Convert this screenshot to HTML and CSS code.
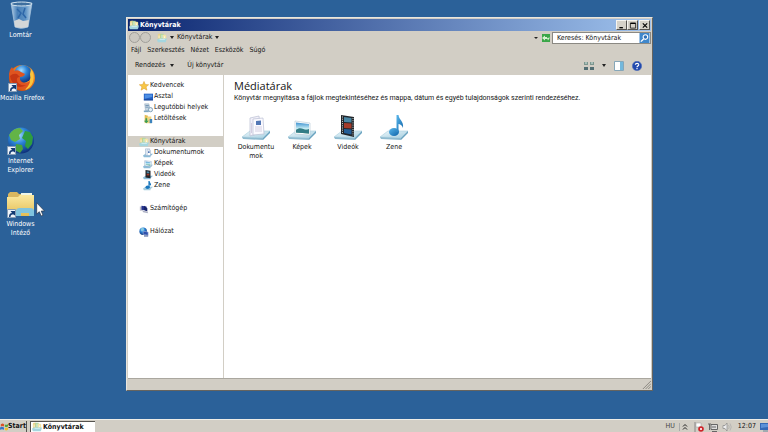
FILE: index.html
```html
<!DOCTYPE html>
<html lang="hu">
<head>
<meta charset="utf-8">
<title>Könyvtárak</title>
<link rel="stylesheet" href="styles.css">
</head>
<body>
<svg class="defs" aria-hidden="true">
  <defs>
    <linearGradient id="g-base" x1="0" y1="0" x2="1" y2="1"><stop offset="0" stop-color="#eef8fb"/><stop offset="1" stop-color="#a4cddf"/></linearGradient>
    <linearGradient id="g-folder" x1="0" y1="0" x2="0" y2="1"><stop offset="0" stop-color="#fbe9a0"/><stop offset="1" stop-color="#e3bd55"/></linearGradient>
    <linearGradient id="g-note" x1="0" y1="0" x2="1" y2="1"><stop offset="0" stop-color="#5bb8ec"/><stop offset="1" stop-color="#0d62a8"/></linearGradient>
    <linearGradient id="g-photo" x1="0" y1="0" x2="0" y2="1"><stop offset="0" stop-color="#3f92d0"/><stop offset=".55" stop-color="#c5ecf4"/><stop offset="1" stop-color="#3d8b74"/></linearGradient>
    <linearGradient id="g-bin" x1="0" y1="0" x2="1" y2="0"><stop offset="0" stop-color="#b4cfe6"/><stop offset=".3" stop-color="#477fb8"/><stop offset=".7" stop-color="#5f94c6"/><stop offset="1" stop-color="#c2d8ea"/></linearGradient>
    <radialGradient id="g-globe" cx=".4" cy=".3" r=".8"><stop offset="0" stop-color="#a5ddff"/><stop offset=".4" stop-color="#2b83d6"/><stop offset="1" stop-color="#071e66"/></radialGradient>
    <radialGradient id="g-fox" cx=".6" cy=".4" r=".7"><stop offset="0" stop-color="#ffd54a"/><stop offset=".6" stop-color="#f0801c"/><stop offset="1" stop-color="#bd3410"/></radialGradient>
    <symbol id="base" viewBox="0 0 30 28">
      <path d="M1 23 9 17H29L22 24Z" fill="url(#g-base)" stroke="#a5cddd" stroke-width=".6"/>
      <path d="M1 23 22 24V26L2 25Z" fill="#8fbbd0"/><path d="M22 24 29 17V19L22 26Z" fill="#6aa3c0"/>
    </symbol>
    <symbol id="docs" viewBox="0 0 30 28">
      <use href="#base"/>
      <path d="M9 4 18 2 20 19 9 22Z" fill="#f3f1fa" stroke="#b9bfd2" stroke-width=".7"/>
      <path d="M12 5 22 4 23 20 12 21Z" fill="#fbfaff" stroke="#b9bfd2" stroke-width=".7"/>
      <path d="M15 7 20 6.500V11L15 11Z" fill="#5377b5"/><path d="M14 13H21M14 15H21M14 17H21M10.500 9V19" stroke="#cdc5da" stroke-width=".8"/>
    </symbol>
    <symbol id="pics" viewBox="0 0 30 28">
      <use href="#base"/>
      <path d="M8 7 23 9V21L8 20Z" fill="#fff" stroke="#b4c8d4" stroke-width=".6"/>
      <path d="M9 8.500 22 10V19.500L9 18.500Z" fill="url(#g-photo)"/><path d="M9 16C14 11 18 18 22 15V19.500L9 18.500Z" fill="#327c86"/>
    </symbol>
    <symbol id="vids" viewBox="0 0 30 28">
      <use href="#base"/>
      <path d="M8 1 21 3V23L8 20Z" fill="#22262b"/>
      <path d="M11 3 18.500 4V8.500L11 8Z" fill="#4a87a4"/><path d="M11 9 18.500 9.500V14.500L11 14Z" fill="#a43b2a"/><path d="M11 15 18.500 15.500V20.500L11 19Z" fill="#245e97"/>
      <path d="M9.500 2.500V20M20 4V22" stroke="#d3d5d0" stroke-width="1" stroke-dasharray="1 1.200"/>
    </symbol>
    <symbol id="music" viewBox="0 0 30 28">
      <use href="#base"/>
      <ellipse cx="15" cy="18" rx="5" ry="4" fill="url(#g-note)"/>
      <path d="M17.500 1H19.500C20 6 25 7 24 14C23 11 21 10 19.500 10V18H17.500Z" fill="url(#g-note)"/>
    </symbol>
    <symbol id="docs-small" viewBox="0 0 12 12"><path d="M0 9 3 7H12L9 10V11H1Z" fill="#8cbcd8"/><path d="M3 1H8V8L3 9Z" fill="#eef3fa" stroke="#8ba6c4" stroke-width=".6"/><path d="M5 2 9 3V9H5Z" fill="#fff" stroke="#8ba6c4" stroke-width=".6"/><path d="M6 4H8V6H6Z" fill="#5377b5"/></symbol>
    <symbol id="pics-small" viewBox="0 0 12 12"><path d="M0 9 3 7H12L9 10V11H1Z" fill="#8cbcd8"/><path d="M2 2 10 3V9L2 8Z" fill="#fff" stroke="#8ba6c4" stroke-width=".6"/><path d="M3 3 9 4V8L3 7Z" fill="url(#g-photo)"/></symbol>
    <symbol id="vids-small" viewBox="0 0 12 12"><path d="M0 9 3 7H12L9 10V11H1Z" fill="#8cbcd8"/><path d="M3 0 9 1V10L3 9Z" fill="#22262b"/><path d="M4.500 1.500 7.500 2V4H4.500Z" fill="#4a87a4"/><path d="M4.500 4.500H7.500V6.500H4.500Z" fill="#a43b2a"/></symbol>
    <symbol id="music-small" viewBox="0 0 12 12"><path d="M0 9 3 7H12L9 10V11H1Z" fill="#a6cde0"/><ellipse cx="5.500" cy="7.500" rx="2.500" ry="2" fill="#1b78be"/><path d="M6.500 0H8C8 2 10.500 3 9.500 6C9 4.500 8 4.500 8 4.500V8H6.500Z" fill="#1b78be"/></symbol>
    <symbol id="library" viewBox="0 0 12 12">
      <path d="M1 2 2 1H5V10H1Z" fill="#ecd488"/><path d="M4 1H8V10H4Z" fill="#a9d29a"/><path d="M7 2H10L11 3V10H7Z" fill="#f3e5a4"/>
      <path d="M0 8 2 6.500H12L10.500 11H1Z" fill="#a5d6df"/><path d="M3 7.500H9.500" stroke="#e0f4f6"/><path d="M2.500 3V6M6 2V6M9 4V6" stroke="#fff" stroke-width=".8"/>
    </symbol>
    <symbol id="star" viewBox="0 0 12 12"><path d="M6 .5 7.600 4.200 11.600 4.500 8.500 7 9.500 11 6 8.900 2.500 11 3.500 7 .4 4.500 4.400 4.200Z" fill="#f8c746" stroke="#d89b2b" stroke-width=".6"/></symbol>
    <symbol id="desktop" viewBox="0 0 12 12"><path d="M1 2H12V10H1Z" fill="#215fc4"/><path d="M2 3H11V6L2 8Z" fill="#4f90e4"/><path d="M1 9H12V10H1Z" fill="#1b3f84"/></symbol>
    <symbol id="recent" viewBox="0 0 12 12"><path d="M2 1H7L9 9H3Z" fill="#c7d7e3" stroke="#8ea5b8" stroke-width=".6"/><path d="M3 3H7M3 5H7" stroke="#688cad"/><circle cx="9" cy="8" r="2.500" fill="#e9f1f6" stroke="#6c93af"/><path d="M1 9H7V11H1Z" fill="#7fa8c4"/></symbol>
    <symbol id="downloads" viewBox="0 0 12 12"><path d="M2 1 6 2V10L2 11Z" fill="#e3bd54"/><path d="M5 3H10V11H4Z" fill="#f0d682"/><path d="M3 5H5V8H7L4 11 1 8H3Z" fill="#399f57"/><path d="M8 6H11V11H8Z" fill="#3c83bd"/></symbol>
    <symbol id="computer" viewBox="0 0 12 12"><path d="M1 3H5V8H1Z" fill="#b9bac8"/><path d="M3 2 9 3V8L3 7Z" fill="#27348f"/><path d="M6 2 10 5V9L6 7Z" fill="#172369"/><path d="M4 8 10 9 11 11 5 10Z" fill="#a9adc0"/></symbol>
    <symbol id="network" viewBox="0 0 12 12"><circle cx="5" cy="5" r="4.500" fill="url(#g-globe)"/><path d="M2 2 5 1 6 3 3 5Z" fill="#8acbdc"/><path d="M5 5 11 6V10L5 9Z" fill="#2e4fac" stroke="#bccbe3" stroke-width=".6"/><path d="M6 10H11V11.500H6Z" fill="#596da0"/></symbol>
    <symbol id="shortcut" viewBox="0 0 9 9"><path d="M.5 .5H8.500V8.500H.5Z" fill="#eef4fa" stroke="#879db5"/><path d="M2 8C2 5 3 4 5 4L3.500 2H8V6.500L6.500 5.500C4.500 5.500 3.500 6 3.500 8Z" fill="#123a72"/></symbol>
    <symbol id="flag" viewBox="0 0 10 11"><path d="M1 2C3 1 4 1 5 2V5C4 4 3 4 1 5Z" fill="#dc5029"/><path d="M6 2C7 3 8 3 10 2V5C8 6 7 6 6 5Z" fill="#55a53c"/><path d="M0 6C2 5 3 5 5 6V9C3 8 2 8 0 9Z" fill="#3777c8"/><path d="M6 6C7 7 8 7 10 6V9C8 10 7 10 6 9Z" fill="#f0bf31"/></symbol>
  </defs>
</svg>

<main class="desktop">
  <nav class="shortcuts" aria-label="Asztal">
    <button class="shortcut">
      <svg class="shortcut-icon" viewBox="0 0 28 28"><path d="M4 2H25L21 26Q14 29 8 26Z" fill="url(#g-bin)" stroke="#a4c2dc" stroke-width=".8"/><ellipse cx="14.500" cy="3" rx="10.500" ry="2" fill="#3e6f9f" stroke="#d5e5f0"/><path d="M7 20 12 18 16 20 22 19 21 26Q14 28 8 26Z" fill="#d4d7d8"/><path d="M10 8 14 12 11 17M18 7 16 13 19 17" fill="none" stroke="#2d66a8" stroke-width="1.500"/></svg>
      <span>Lomtár</span>
    </button>
    <button class="shortcut">
      <svg class="shortcut-icon" viewBox="0 0 28 28"><circle cx="14" cy="14" r="13" fill="url(#g-fox)"/><circle cx="15" cy="10" r="9" fill="url(#g-globe)"/><path d="M1 10Q1 6 4 3L6 7Q10 5 13 8L17 10Q16 13 12 13Q11 18 17 19Q22 18 24 15Q22 25 13 25Q3 24 1 10Z" fill="#df5420"/><path d="M2 12Q5 9 9 10L12 13Q8 13 9 17Q11 22 18 21Q12 25 7 21Q3 18 2 12Z" fill="#c63714"/><path d="M23 5Q27 10 25 18Q23 24 17 26Q24 19 22 10Z" fill="#fbc53c"/><use href="#shortcut" x="0" y="19" width="9" height="9"/></svg>
      <span>Mozilla Firefox</span>
    </button>
    <button class="shortcut">
      <svg class="shortcut-icon" viewBox="0 0 28 28"><circle cx="14" cy="13.500" r="13" fill="url(#g-globe)"/><path d="M2 8Q6 1 13 1L16 4 12 8 13 12 8 15 4 13Z" fill="#63b447"/><path d="M18 4 23 5 26 10 25 17 21 22 18 19 19 14 15 11Z" fill="#2f9c3f"/><path d="M9 17 15 18 16 22 13 26 8 23Z" fill="#48a13e"/><use href="#shortcut" x="0" y="19" width="9" height="9"/></svg>
      <span>Internet Explorer</span>
    </button>
    <button class="shortcut">
      <svg class="shortcut-icon" viewBox="0 0 28 28"><path d="M1 4 3 2H10L12 4H25V25H1Z" fill="#d9b760"/><path d="M14 3H25V8H14Z" fill="#eff6e7"/><path d="M0 7H11L13 5H27V26H0Z" fill="url(#g-folder)"/><path d="M9 26V21Q9 18 13 18H23Q27 18 27 21V26H22V23H14V26Z" fill="#80c4df"/><use href="#shortcut" x="0" y="19" width="9" height="9"/></svg>
      <span>Windows Intéző</span>
    </button>
  </nav>

  <svg class="pointer" viewBox="0 0 9 15" aria-hidden="true"><path d="M.7 .8V12L3.300 9.700 5.200 14 7 13.200 5.200 9H8.500Z" fill="#fff" stroke="#26364a" stroke-width=".7"/></svg>

  <section class="window" aria-label="Könyvtárak">
    <header class="titlebar">
      <svg class="icon"><use href="#library"/></svg>
      <h1 class="window-title">Könyvtárak</h1>
      <button class="caption" aria-label="Kis méret"><svg viewBox="0 0 8 8"><path d="M1 6.500H5" stroke="#000" stroke-width="1.500"/></svg></button>
      <button class="caption" aria-label="Teljes méret"><svg viewBox="0 0 8 8"><path d="M1 1.500H7V7H1Z" fill="none" stroke="#222"/><path d="M1 1.500H7" stroke="#000" stroke-width="1.500"/></svg></button>
      <button class="caption close" aria-label="Bezárás"><svg viewBox="0 0 8 8"><path d="M1.500 1.500 6.500 6.500M6.500 1.500 1.500 6.500" stroke="#000" stroke-width="1.300"/></svg></button>
    </header>
    <div class="address">
      <button class="nav" aria-label="Vissza"></button>
      <button class="nav" aria-label="Előre"></button>
      <svg class="icon address-icon"><use href="#library"/></svg>
      <i class="arrow"></i>
      <button class="crumb">Könyvtárak</button>
      <i class="arrow"></i>
      <i class="arrow small push"></i>
      <button class="refresh" aria-label="Frissítés"><svg viewBox="0 0 10 10"><path d="M1 1H9V9H1Z" fill="#3aa648"/><path d="M1 5 4 2.500V4H6V6H4V7.500ZM9 4.500 7 7.500 6 5Z" fill="#d8f2d1"/></svg></button>
      <div class="search">
        <input type="text" value="Keresés: Könyvtárak" aria-label="Keresés">
        <button class="find" aria-label="Keresés indítása"><svg viewBox="0 0 11 11"><path d="M0 0H11V11H0Z" fill="#3e87cc"/><circle cx="6.500" cy="4.500" r="2.500" fill="#2b6fb8" stroke="#fff" stroke-width="1.200"/><path d="M4.500 6.500 1.500 9.500" stroke="#fff" stroke-width="1.500"/></svg></button>
      </div>
    </div>
    <nav class="menu" aria-label="Menü">
      <button>Fájl</button><button>Szerkesztés</button><button>Nézet</button><button>Eszközök</button><button>Súgó</button>
    </nav>
    <div class="toolbar">
      <button>Rendezés <i class="arrow"></i></button>
      <button>Új könyvtár</button>
      <button class="push" aria-label="Nézet módosítása"><svg class="icon" viewBox="0 0 10 10"><path d="M0 1H4V4H0ZM6 1H10V4H6Z" fill="#7d9790"/><path d="M0 6H4V9H0ZM6 6H10V9H6Z" fill="#526e73"/><path d="M1 2H3M7 2H9" stroke="#d5e7e2"/></svg></button>
      <button aria-label="További lehetőségek"><i class="arrow"></i></button>
      <button aria-label="Előnézet"><svg class="icon" viewBox="0 0 10 10"><path d="M.5 .5H9.500V9.500H.5Z" fill="#fff" stroke="#86a7b9"/><path d="M6 1H9V9H6Z" fill="#73b8dc"/></svg></button>
      <button aria-label="Súgó"><svg class="icon" viewBox="0 0 10 10"><circle cx="5" cy="5" r="4.700" fill="#2149ae" stroke="#5873b8" stroke-width=".6"/><path d="M3.300 3.800C3.500 2 6.800 2 6.700 3.900C6.600 5 5 5 5 6.200M5 7V8.200" fill="none" stroke="#fff" stroke-width="1.200"/></svg></button>
    </div>
    <div class="content">
      <aside class="sidebar">
        <ul>
          <li><a href="#"><svg class="icon"><use href="#star"/></svg>Kedvencek</a></li>
          <li class="child"><a href="#"><svg class="icon"><use href="#desktop"/></svg>Asztal</a></li>
          <li class="child"><a href="#"><svg class="icon"><use href="#recent"/></svg>Legutóbbi helyek</a></li>
          <li class="child"><a href="#"><svg class="icon"><use href="#downloads"/></svg>Letöltések</a></li>
        </ul>
        <ul>
          <li class="selected"><a href="#"><svg class="icon"><use href="#library"/></svg>Könyvtárak</a></li>
          <li class="child"><a href="#"><svg class="icon"><use href="#docs-small"/></svg>Dokumentumok</a></li>
          <li class="child"><a href="#"><svg class="icon"><use href="#pics-small"/></svg>Képek</a></li>
          <li class="child"><a href="#"><svg class="icon"><use href="#vids-small"/></svg>Videók</a></li>
          <li class="child"><a href="#"><svg class="icon"><use href="#music-small"/></svg>Zene</a></li>
        </ul>
        <ul><li><a href="#"><svg class="icon"><use href="#computer"/></svg>Számítógép</a></li></ul>
        <ul><li><a href="#"><svg class="icon"><use href="#network"/></svg>Hálózat</a></li></ul>
      </aside>
      <section class="libraries">
        <h2>Médiatárak</h2>
        <p>Könyvtár megnyitása a fájlok megtekintéséhez és mappa, dátum és egyéb tulajdonságok szerinti rendezéséhez.</p>
        <div class="tiles">
          <button class="tile"><svg><use href="#docs"/></svg><span>Dokumentu<br>mok</span></button>
          <button class="tile"><svg><use href="#pics"/></svg><span>Képek</span></button>
          <button class="tile"><svg><use href="#vids"/></svg><span>Videók</span></button>
          <button class="tile"><svg><use href="#music"/></svg><span>Zene</span></button>
        </div>
      </section>
    </div>
    <footer class="status"><svg viewBox="0 0 10 10"><path d="M1 10 10 1M4 10 10 4M7 10 10 7" stroke="#85827b"/></svg></footer>
  </section>
</main>

<footer class="taskbar">
  <button class="start"><svg viewBox="0 0 10 11"><use href="#flag"/></svg>Start</button>
  <button class="task"><svg class="icon"><use href="#library"/></svg>Könyvtárak</button>
  <div class="tray">
    <span class="lang">HU</span>
    <button class="expand" aria-label="Rejtett ikonok"><svg viewBox="0 0 6 8"><path d="M1 3.500 3 1.500 5 3.500M1 6.500 3 4.500 5 6.500" fill="none" stroke="#222"/></svg></button>
    <svg class="icon" viewBox="0 0 10 10"><path d="M1 0V10" stroke="#888"/><path d="M2 1H7V5H2Z" fill="#fff" stroke="#999" stroke-width=".5"/><circle cx="7" cy="7" r="2.800" fill="#cf2329"/><path d="M6 6 8 8M8 6 6 8" stroke="#fff" stroke-width=".8"/></svg>
    <svg class="icon" viewBox="0 0 10 10"><path d="M3 2.500H9.500V7.500H3Z" fill="#dedede" stroke="#666"/><path d="M0 2H3M1.500 2V8M4 9.500H9M4 5H8" stroke="#666"/></svg>
    <svg class="icon" viewBox="0 0 10 10"><path d="M1 3.500H3L5 1V9L3 6.500H1Z" fill="#eee" stroke="#888" stroke-width=".7"/><path d="M6.500 3Q8 5 6.500 7M8 1.500Q10.500 5 8 8.500" fill="none" stroke="#aaa" stroke-width=".7"/></svg>
    <time>12:07</time>
    <button class="show-desktop" aria-label="Asztal megjelenítése"><svg viewBox="0 0 8 10"><path d="M0 1H8V8H0Z" fill="#3569b7"/><path d="M1 2H8V5L1 6Z" fill="#5c91d8"/><path d="M3 9H8" stroke="#71869c"/></svg></button>
  </div>
</footer>
</body>
</html>
```
FILE: styles.css
```css
* { box-sizing: border-box; }
html, body { height: 100%; }
body {
  margin: 0;
  display: flex;
  flex-direction: column;
  overflow: hidden;
  background: #2b6199;
  color: #151515;
  font: 7px/9px "DejaVu Sans Condensed", "DejaVu Sans", sans-serif;
}
button, input {
  margin: 0;
  padding: 0;
  border: 0;
  background: none;
  color: inherit;
  font: inherit;
}
svg { display: block; flex: none; }
a { color: inherit; text-decoration: none; }
ul { list-style: none; margin: 0; padding: 0; }
.defs { position: absolute; width: 0; height: 0; }
.icon { width: 10px; height: 10px; }
.push { margin-left: auto; }
.arrow {
  flex: none;
  border: 2px solid transparent;
  border-top: 3px solid #222;
  border-bottom: 0;
}
.arrow.small { border-width: 2px 2px 0; }

.desktop { position: relative; flex: 1; min-height: 0; }
.shortcuts { display: flex; flex-direction: column; width: 41px; padding-top: 1px; }
.shortcut {
  display: flex;
  flex-direction: column;
  align-items: center;
  gap: 2px;
  height: 63px;
  color: #fff;
  text-align: center;
}
.shortcut span { width: min-content; }
.shortcut:nth-child(2) { width: max-content; }
.shortcut:nth-child(2) span { white-space: nowrap; }
.shortcut-icon { width: 28px; height: 28px; }
.pointer { position: absolute; left: 36px; top: 202px; width: 9px; height: 15px; }

.window {
  position: absolute;
  inset: 17px 115px 28px 126px;
  display: flex;
  flex-direction: column;
  padding: 1px;
  background: #d2cec5;
  border: 1px solid #e9e6df;
  border-right-color: #66645f;
  border-bottom-color: #66645f;
}
.titlebar {
  display: flex;
  align-items: center;
  height: 12px;
  padding: 0 1px;
  background: linear-gradient(90deg, #0a2570, #9fc2ed);
  color: #fff;
}
.window-title, .start, .task { font-size: 7px; font-weight: 700; line-height: 9px; }
.window-title { flex: 1; margin: 0 0 0 1px; }
.caption {
  width: 11px;
  height: 10px;
  padding: 1px;
  background: #d6d2c9;
  border: 1px solid #f7f5f0;
  border-right-color: #55534f;
  border-bottom-color: #55534f;
}
.caption.close { margin-left: 1px; }
.caption svg { width: 8px; height: 7px; }
.address { display: flex; align-items: center; height: 13px; padding-left: 1px; }
.nav { width: 11px; height: 11px; border: 1px solid #a19f9a; border-radius: 50%; background: #cbc8c1; }
.address-icon { margin: 0 3px 0 6px; }
.crumb { margin: 0 2px 0 3px; }
.refresh svg { width: 10px; height: 10px; margin: 0 1px 0 3px; }
.search {
  display: flex;
  align-items: center;
  width: 99px;
  height: 12px;
  background: #fff;
  border: 1px solid #8b8983;
}
.search input { flex: 1; min-width: 0; height: 10px; padding-left: 4px; }
.find svg { width: 11px; height: 10px; }
.menu { display: flex; align-items: center; gap: 6px; height: 12px; padding-left: 3px; }
.toolbar { display: flex; align-items: center; gap: 8px; height: 19px; padding: 0 9px 0 7px; }
.toolbar button { display: flex; align-items: center; gap: 5px; }
.toolbar button:nth-child(2) { margin-left: 5px; }

.content { display: flex; flex: 1; min-height: 0; background: #fff; }
.sidebar { flex: none; width: 96px; padding-top: 5px; border-right: 1px solid #d2cec5; }
.sidebar ul { margin-bottom: 12px; }
.sidebar a { display: flex; align-items: center; gap: 1px; height: 11px; padding-left: 11px; }
.sidebar .child a { padding-left: 15px; }
.selected { background: #d2cec5; }
.libraries { flex: 1; min-width: 0; padding: 4px 10px; }
.libraries h2 { margin: 0; font: 400 11px/14px "Open Sans", "Noto Sans", sans-serif; }
.libraries p { margin: 0; font-family: Roboto, sans-serif; line-height: 10px; }
.tiles { display: flex; flex-wrap: wrap; margin-top: 11px; margin-left: -1px; }
.tile { display: flex; flex-direction: column; align-items: center; gap: 1px; width: 46px; }
.tile svg { width: 30px; height: 28px; }
.status { display: flex; align-items: flex-end; justify-content: flex-end; height: 11px; border-top: 1px solid #aaa79f; }
.status svg { width: 9px; height: 9px; }

.taskbar {
  display: flex;
  align-items: center;
  height: 13px;
  padding-top: 1px;
  background: #d2cec5;
  border-top: 1px solid #efede7;
}
.start, .task { display: flex; align-items: center; height: 11px; }
.start { width: 27px; border-right: 1px solid #55534f; }
.start svg { width: 8px; height: 10px; }
.task { width: 65px; margin-left: 3px; padding-left: 1px; gap: 1px; background: #fff; border-left: 1px solid #55534f; border-top: 1px solid #55534f; }
.tray { display: flex; align-items: center; gap: 4px; margin-left: auto; }
.lang { color: #444; }
.expand { padding: 0 2px; border-left: 1px solid #aaa; }
.expand svg { width: 6px; height: 8px; }
.tray time { margin-left: 2px; }
.show-desktop svg { width: 8px; height: 10px; }
```
